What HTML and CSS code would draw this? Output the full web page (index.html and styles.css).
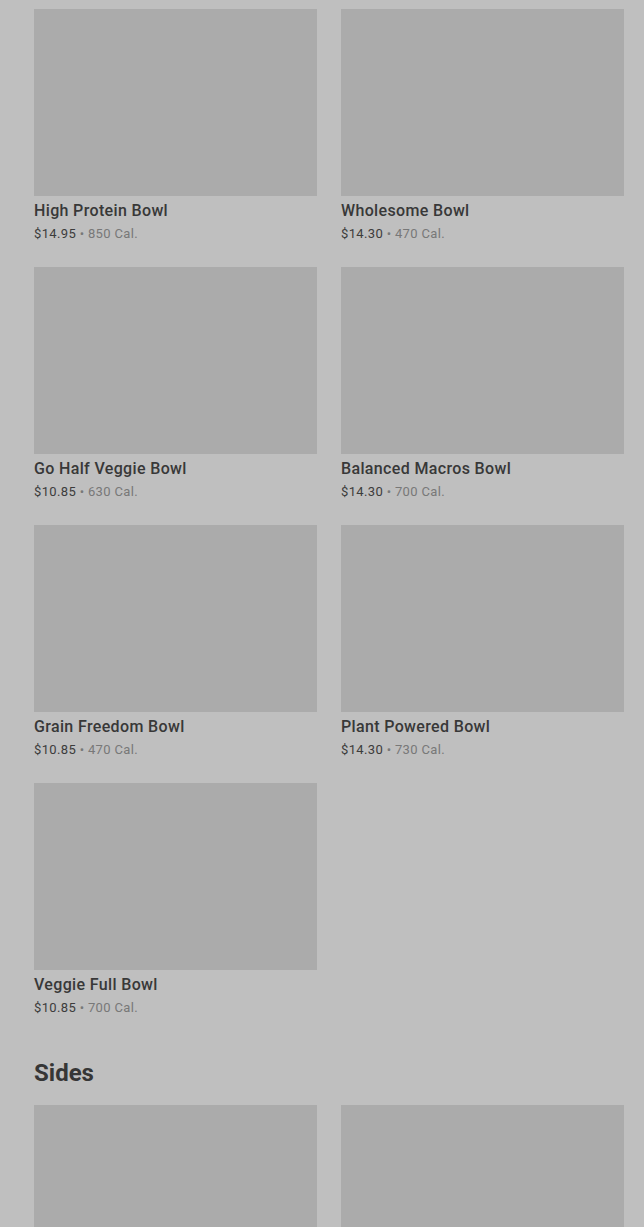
FILE: index.html
```html
<!DOCTYPE html>
<html lang="en">
<head>
  <meta charset="UTF-8" />
  <meta name="viewport" content="width=device-width, initial-scale=1.0"/>
  <title>Menu</title>
  <link rel="stylesheet" href="styles.css">
</head>
<body>
  <div class="menu">
    <div class="grid">
      <div class="item">
        <div class="thumb"></div>
        <div class="name">High Protein Bowl</div>
        <div class="meta"><span class="price">$14.95</span> • 850 Cal.</div>
      </div>
      <div class="item">
        <div class="thumb"></div>
        <div class="name">Wholesome Bowl</div>
        <div class="meta"><span class="price">$14.30</span> • 470 Cal.</div>
      </div>
      <div class="item">
        <div class="thumb"></div>
        <div class="name">Go Half Veggie Bowl</div>
        <div class="meta"><span class="price">$10.85</span> • 630 Cal.</div>
      </div>
      <div class="item">
        <div class="thumb"></div>
        <div class="name">Balanced Macros Bowl</div>
        <div class="meta"><span class="price">$14.30</span> • 700 Cal.</div>
      </div>
      <div class="item">
        <div class="thumb"></div>
        <div class="name">Grain Freedom Bowl</div>
        <div class="meta"><span class="price">$10.85</span> • 470 Cal.</div>
      </div>
      <div class="item">
        <div class="thumb"></div>
        <div class="name">Plant Powered Bowl</div>
        <div class="meta"><span class="price">$14.30</span> • 730 Cal.</div>
      </div>
      <div class="item">
        <div class="thumb"></div>
        <div class="name">Veggie Full Bowl</div>
        <div class="meta"><span class="price">$10.85</span> • 700 Cal.</div>
      </div>
    </div>

    <h2 class="section-title">Sides</h2>
    <div class="grid">
      <div class="item">
        <div class="thumb"></div>
      </div>
      <div class="item">
        <div class="thumb"></div>
      </div>
    </div>
  </div>
</body>
</html>
```

FILE: styles.css
```css
body {
  margin: 0;
  padding: 0;
  font-family: 'Roboto', 'Liberation Sans', sans-serif;
  background: #bfbfbf;
  color: #363636;
  overflow: hidden;
}

.menu {
  padding: 9px 20px 0 34px;
}

.grid {
  display: grid;
  grid-template-columns: 283px 283px;
  column-gap: 24px;
  row-gap: 23px;
}

.thumb {
  height: 187px;
  background: #ababab;
}

.name {
  margin-top: 5px;
  font-size: 16px;
  line-height: 20px;
  font-weight: 500;
  letter-spacing: 0.35px;
  color: #383838;
}

.meta {
  margin-top: 3px;
  font-size: 13px;
  line-height: 20px;
  letter-spacing: 0.35px;
  color: #787878;
}

.price {
  color: #3c3c3c;
}

.section-title {
  margin: 39px 0 16px;
  font-size: 24px;
  line-height: 32px;
  font-weight: 700;
  color: #363636;
}
```
